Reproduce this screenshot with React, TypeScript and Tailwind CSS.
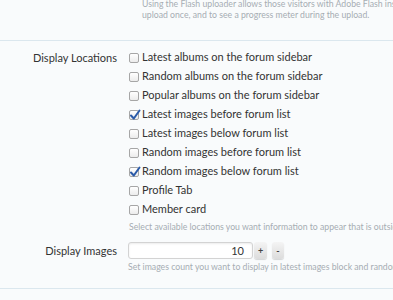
import React from 'react';

const locations: { label: string; checked: boolean }[] = [
  { label: 'Latest albums on the forum sidebar', checked: false },
  { label: 'Random albums on the forum sidebar', checked: false },
  { label: 'Popular albums on the forum sidebar', checked: false },
  { label: 'Latest images before forum list', checked: true },
  { label: 'Latest images below forum list', checked: false },
  { label: 'Random images before forum list', checked: false },
  { label: 'Random images below forum list', checked: true },
  { label: 'Profile Tab', checked: false },
  { label: 'Member card', checked: false },
];

const CheckBox: React.FC<{ checked: boolean }> = ({ checked }) => (
  <span className="relative inline-block w-[10px] h-[10px] shrink-0 rounded-[2px] border border-[#a6a6a6] bg-gradient-to-b from-white to-[#ececec]">
    {checked && (
      <svg viewBox="0 0 12 12" className="absolute -left-[1px] -top-[2px] w-[12px] h-[12px]">
        <path d="M2 6.5 L4.8 9.5 L10.5 1.5" fill="none" stroke="#2a5aa8" strokeWidth="2" strokeLinecap="round" strokeLinejoin="round" />
      </svg>
    )}
  </span>
);

export default function App() {
  return (
    <div className="w-[393px] h-[300px] overflow-hidden bg-[#f9fbfc] text-[#333] font-['Lato','Liberation_Sans',Arial,sans-serif]">
      {/* tail of previous option */}
      <div className="pl-[142px] -mt-[1px] text-[8.7px] leading-[10.5px] text-[#a6adb3] whitespace-nowrap">
        <p>Using the Flash uploader allows those visitors with Adobe Flash installed to select multiple files to</p>
        <p>upload once, and to see a progress meter during the upload.</p>
      </div>

      <div className="mt-[20px] border-t border-[#dbe7ee]" />

      <div className="pt-[7px] flex">
        <div className="w-[117px] shrink-0 text-right text-[11px] leading-[19px]">Display Locations</div>
        <div className="pl-[12px] flex-1 min-w-0">
          {locations.map((loc) => (
            <label key={loc.label} className="flex items-center h-[19px] text-[11px] whitespace-nowrap">
              <CheckBox checked={loc.checked} />
              <span className="ml-[3px]">{loc.label}</span>
            </label>
          ))}
          <p className="mt-[2px] text-[8.7px] leading-[12px] text-[#a6adb3] whitespace-nowrap">
            Select available locations you want information to appear that is outside of the gallery.
          </p>
        </div>
      </div>

      <div className="mt-[9px] flex">
        <div className="w-[117px] shrink-0 text-right text-[11px] leading-[17px]">Display Images</div>
        <div className="pl-[11px] flex-1 min-w-0">
          <div className="flex items-center">
            <div className="w-[125px] h-[17px] rounded-[3px] border border-[#d3d3d3] bg-white shadow-[inset_0_1px_2px_rgba(0,0,0,0.08)] text-right pr-[8px] text-[11px] leading-[15px]">
              10
            </div>
            <button className="ml-[1px] w-[13px] h-[17px] rounded-[3px] bg-gradient-to-b from-[#f4f4f4] to-[#dcdcdc] shadow-[0_1px_1px_rgba(0,0,0,0.15)] text-[9px] leading-[17px] font-bold text-[#444]">
              +
            </button>
            <button className="ml-[5px] w-[12px] h-[17px] rounded-[3px] bg-gradient-to-b from-[#f4f4f4] to-[#dcdcdc] shadow-[0_1px_1px_rgba(0,0,0,0.15)] text-[9px] leading-[17px] font-bold text-[#444]">
              -
            </button>
          </div>
          <p className="mt-[2px] text-[8.7px] leading-[12px] text-[#a6adb3] whitespace-nowrap">
            Set images count you want to display in latest images block and random images block.
          </p>
        </div>
      </div>

      <div className="mt-[15px] border-t border-[#dbe7ee]" />
    </div>
  );
}
